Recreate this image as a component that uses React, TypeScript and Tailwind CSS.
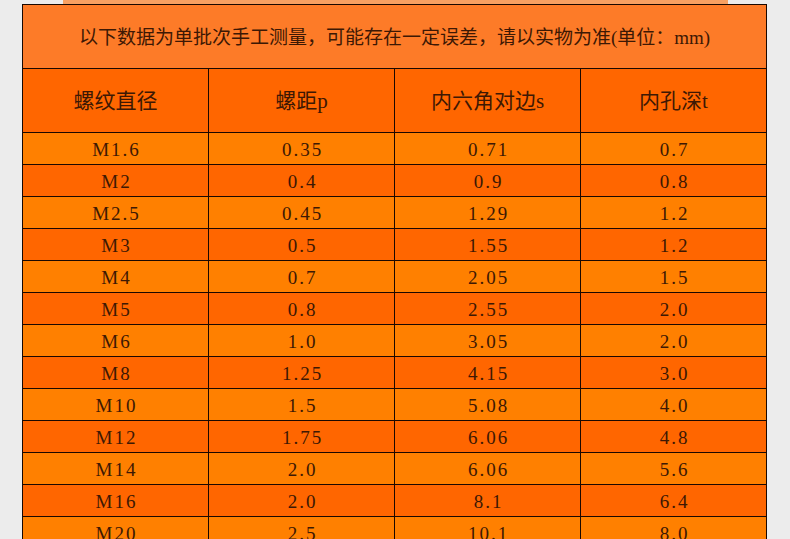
import React from "react";

const rows = [
  ["M1.6", "0.35", "0.71", "0.7"],
  ["M2", "0.4", "0.9", "0.8"],
  ["M2.5", "0.45", "1.29", "1.2"],
  ["M3", "0.5", "1.55", "1.2"],
  ["M4", "0.7", "2.05", "1.5"],
  ["M5", "0.8", "2.55", "2.0"],
  ["M6", "1.0", "3.05", "2.0"],
  ["M8", "1.25", "4.15", "3.0"],
  ["M10", "1.5", "5.08", "4.0"],
  ["M12", "1.75", "6.06", "4.8"],
  ["M14", "2.0", "6.06", "5.6"],
  ["M16", "2.0", "8.1", "6.4"],
  ["M20", "2.5", "10.1", "8.0"],
];

const headers = ["螺纹直径", "螺距p", "内六角对边s", "内孔深t"];

const font = {
  fontFamily: '"Liberation Serif", "Noto Sans CJK SC", serif',
};

export default function App() {
  return (
    <div
      className="w-[790px] h-[539px] overflow-hidden bg-[#ececec] text-[#3d1804]"
      style={font}
    >
      <div className="ml-[63px] w-[665px] h-[4px] bg-[#f7a062]" />
      <div className="ml-[22px] w-[745px] border-l border-t border-[#1a0800]">
        <div className="h-[64px] bg-[#fd7b28] border-r border-b border-[#1a0800] flex items-center justify-center text-[19px] pt-[3px]">
          以下数据为单批次手工测量，可能存在一定误差，请以实物为准(单位：mm)
        </div>
        <div className="flex h-[64px] bg-[#ff6600] border-b border-[#1a0800]">
          {headers.map((h) => (
            <div
              key={h}
              className="w-[186px] border-r border-[#1a0800] flex items-center justify-center text-[21px] pt-[2px]"
            >
              {h}
            </div>
          ))}
        </div>
        {rows.map((r, i) => (
          <div
            key={r[0]}
            className={
              i % 2 === 0
                ? "flex h-[32px] bg-[#ff8000] border-b border-[#1a0800]"
                : "flex h-[32px] bg-[#ff6600] border-b border-[#1a0800]"
            }
          >
            {r.map((c, j) => (
              <div
                key={j}
                className="w-[186px] border-r border-[#1a0800] flex items-center justify-center text-[19px] tracking-[2px] pt-[3px] pl-[2px]"
              >
                {c}
              </div>
            ))}
          </div>
        ))}
      </div>
    </div>
  );
}
